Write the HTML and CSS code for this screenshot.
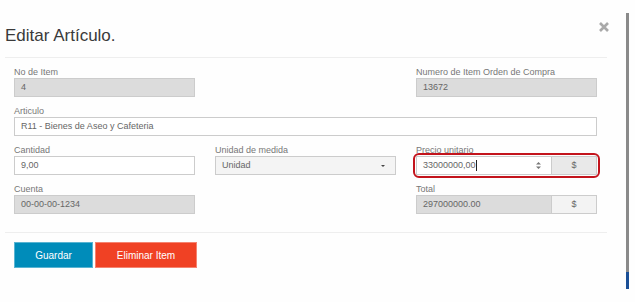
FILE: index.html
```html
<!DOCTYPE html>
<html lang="es">
<head>
<meta charset="UTF-8" />
<meta name="viewport" content="width=device-width, initial-scale=1" />
<title>Editar Artículo</title>
<link rel="stylesheet" href="styles.css">
</head>
<body>

<div class="page">
  <div class="modal">
    <header class="modal-head">
      <h2>Editar Artículo.</h2>
      <a href="#" class="close-btn" aria-label="Cerrar">
        <svg width="12" height="10" viewBox="0 0 12 10"><path d="M2 1 L10 9 M10 1 L2 9" stroke="#a9a9a9" stroke-width="2.6" stroke-linecap="butt"/></svg>
      </a>
    </header>

    <form class="item-form">
      <div class="field">
        <label>No de Item</label>
        <div class="input ro">4</div>
      </div>
      <div class="field"></div>
      <div class="field">
        <label>Numero de Item Orden de Compra</label>
        <div class="input ro">13672</div>
      </div>

      <div class="field wide">
        <label>Articulo</label>
        <div class="input">R11 - Bienes de Aseo y Cafeteria</div>
      </div>

      <div class="field">
        <label>Cantidad</label>
        <div class="input">9,00</div>
      </div>
      <div class="field">
        <label>Unidad de medida</label>
        <div class="input select">Unidad<span class="caret"></span></div>
      </div>
      <div class="field">
        <label>Precio unitario</label>
        <div class="input-group focused">
          <div class="input">33000000,00<span class="cursor"></span>
            <svg class="spin" width="5" height="7" viewBox="0 0 5 7"><path d="M2.5 0 L5 2.6 L0 2.6 Z M0 4.4 L5 4.4 L2.5 7 Z" fill="#777"/></svg>
          </div>
          <div class="addon">$</div>
        </div>
      </div>

      <div class="field">
        <label>Cuenta</label>
        <div class="input ro">00-00-00-1234</div>
      </div>
      <div class="field"></div>
      <div class="field">
        <label>Total</label>
        <div class="input-group">
          <div class="input ro">297000000.00</div>
          <div class="addon light">$</div>
        </div>
      </div>
    </form>

    <div class="modal-foot">
      <button type="button" class="btn btn-save">Guardar</button>
      <button type="button" class="btn btn-delete">Eliminar Item</button>
    </div>
  </div>

  <div class="edge"><span class="edge-blue"></span></div>
</div>

</body>
</html>
```

FILE: styles.css
```css
body {
  margin: 0;
  background: #fefefe;
  font-family: 'Liberation Sans', Arial, sans-serif;
  color: #555;
}
.page {
  display: flex;
  align-items: flex-start;
}
.modal {
  width: 626px;
}
.modal-head {
  margin-left: 5px;
  width: 602px;
  padding: 26px 0 11px;
  border-bottom: 1px solid #eee;
  display: flex;
  justify-content: space-between;
  align-items: flex-start;
}
.modal-head h2 {
  margin: 0;
  font-size: 17px;
  line-height: 20px;
  font-weight: normal;
  color: #3a3a3a;
}
.close-btn {
  display: block;
  margin-top: -4px;
  margin-right: -3px;
  line-height: 0;
}
.item-form {
  margin: 0 0 0 5px;
  width: 602px;
  box-sizing: border-box;
  padding: 9px 0 0 9px;
  display: grid;
  grid-template-columns: 181px 181px 181px;
  column-gap: 20px;
  row-gap: 9px;
}
.field.wide {
  grid-column: 1 / 4;
}
.field label {
  display: block;
  font-size: 9px;
  line-height: 10px;
  margin-bottom: 1px;
  color: #777;
}
.input {
  box-sizing: border-box;
  height: 19px;
  border: 1px solid #ccc;
  background: #fff;
  padding: 0 6px;
  font-size: 9px;
  line-height: 17px;
  color: #666;
  display: flex;
  align-items: center;
}
.input.ro {
  background: #dcdcdc;
}
.input.select {
  background: #f4f4f4;
  justify-content: space-between;
}
.caret {
  width: 0; height: 0;
  border-left: 2px solid transparent;
  border-right: 2px solid transparent;
  border-top: 2px solid #444;
  margin-right: 4px;
}
.input-group {
  display: flex;
  height: 19px;
}
.input-group .input {
  flex: 1;
}
.input-group.focused {
  outline: 2px solid #c3141c;
  outline-offset: 1px;
  border-radius: 3px;
}
.cursor {
  width: 1px;
  height: 11px;
  background: #222;
}
.spin {
  margin-left: auto;
  margin-right: 4px;
}
.addon {
  box-sizing: border-box;
  width: 45px;
  height: 19px;
  border: 1px solid #ccc;
  border-left: none;
  background: #e9e9e9;
  font-size: 9px;
  line-height: 17px;
  text-align: center;
  color: #666;
}
.addon.light {
  background: #f3f3f3;
}
.modal-foot {
  margin: 18px 0 0 5px;
  width: 602px;
  border-top: 1px solid #eee;
  padding: 9px 0 0 9px;
  box-sizing: border-box;
  display: flex;
  gap: 2px;
}
.btn {
  height: 26px;
  border: 1px solid rgba(255,255,255,0.35);
  color: #fff;
  font-family: inherit;
  font-size: 10px;
  cursor: pointer;
  padding: 0;
}
.btn-save {
  width: 79px;
  background: #008cba;
}
.btn-delete {
  width: 102px;
  background: #f04124;
}
.edge {
  margin-top: 13px;
  width: 3px;
  height: 276px;
  background: #8a8a8a;
  display: flex;
  align-items: flex-end;
}
.edge-blue {
  display: block;
  width: 3px;
  height: 17px;
  background: #1b4f96;
}
```
